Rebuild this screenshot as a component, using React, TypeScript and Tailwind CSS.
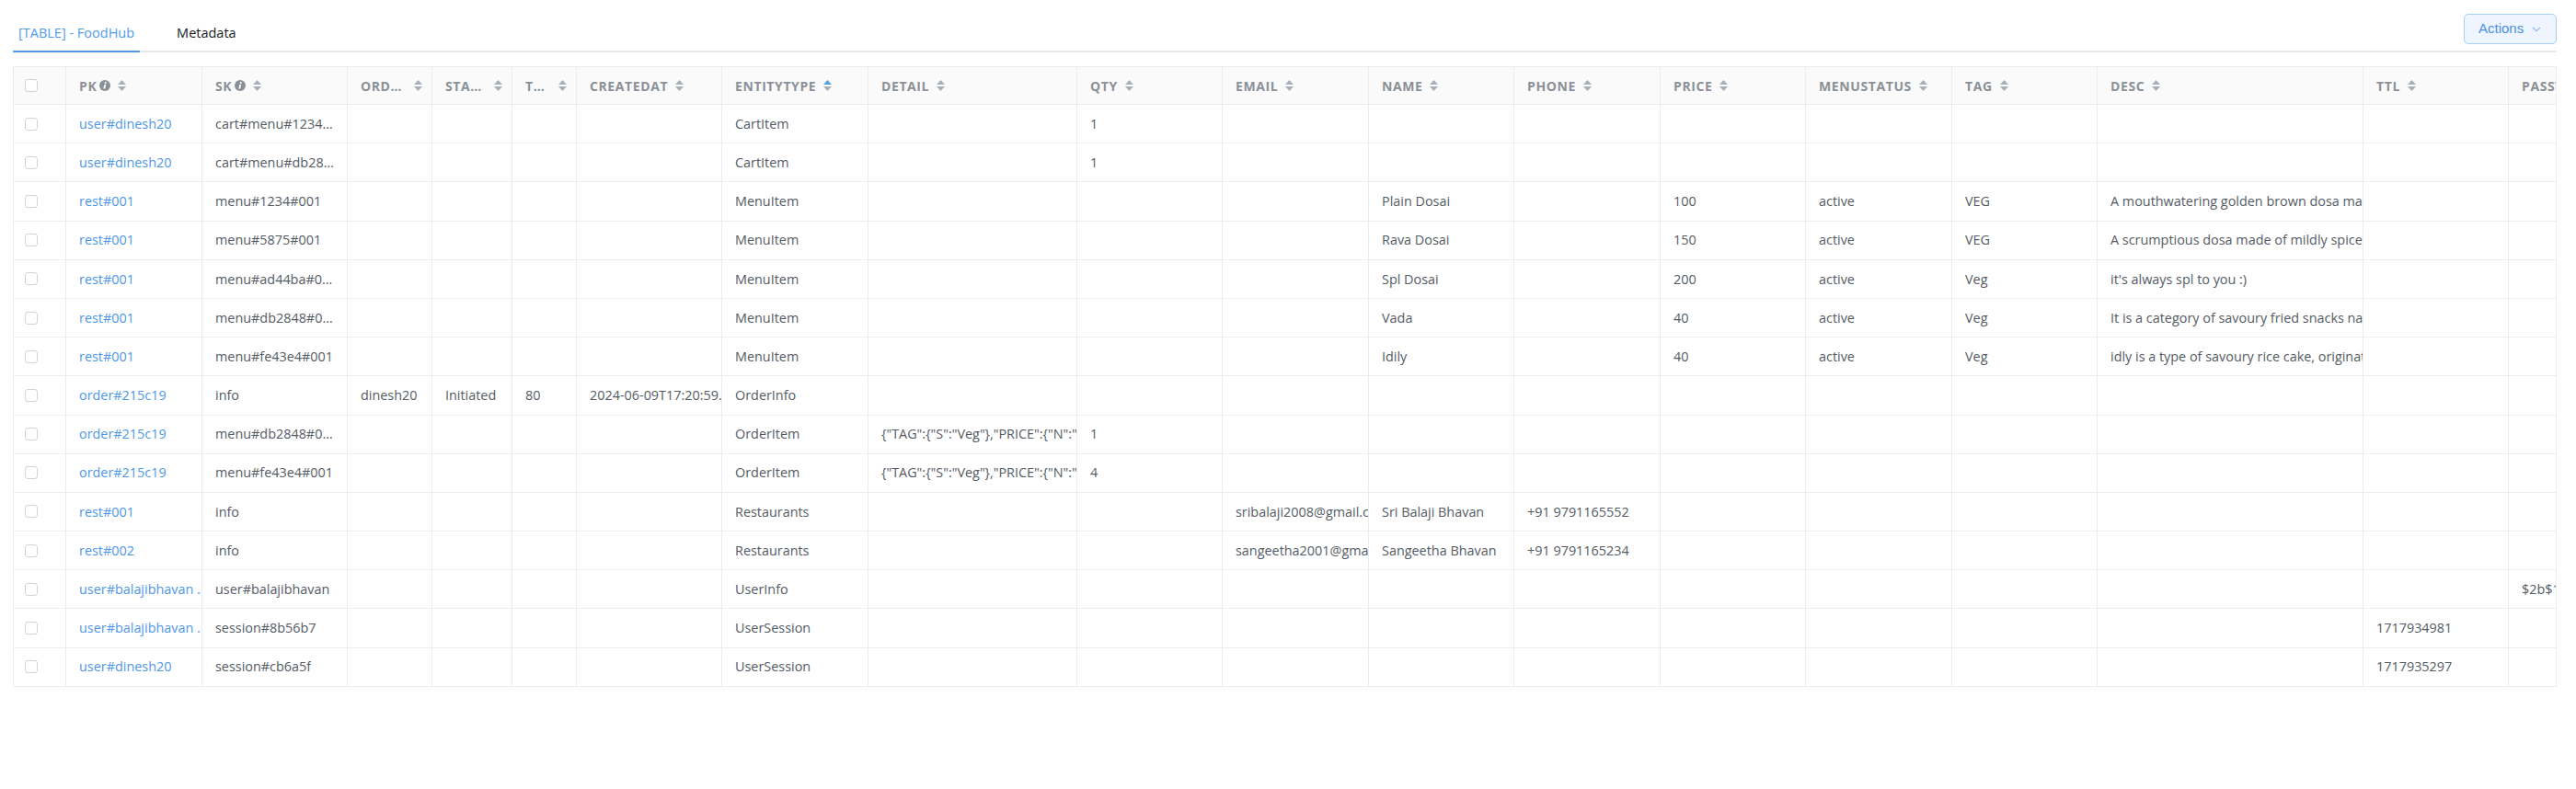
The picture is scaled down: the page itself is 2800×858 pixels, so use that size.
import React from "react";

type Col = {
  key: string;
  label?: string;
  w: string;
  info?: boolean;
  ell?: boolean;
  link?: boolean;
  active?: boolean;
};

const cols: Col[] = [
  { key: "cb", w: "w-[57px]" },
  { key: "PK", label: "PK", w: "w-[148px]", info: true, link: true },
  { key: "SK", label: "SK", w: "w-[158px]", info: true, ell: true },
  { key: "ORDEREDBY", label: "ORDEREDBY", w: "w-[92px]" },
  { key: "STATUS", label: "STATUS", w: "w-[87px]" },
  { key: "TOTAL", label: "TOTAL", w: "w-[70px]" },
  { key: "CREATEDAT", label: "CREATEDAT", w: "w-[158px]" },
  { key: "ENTITYTYPE", label: "ENTITYTYPE", w: "w-[159px]", active: true },
  { key: "DETAIL", label: "DETAIL", w: "w-[227px]" },
  { key: "QTY", label: "QTY", w: "w-[158px]" },
  { key: "EMAIL", label: "EMAIL", w: "w-[159px]" },
  { key: "NAME", label: "NAME", w: "w-[158px]" },
  { key: "PHONE", label: "PHONE", w: "w-[159px]" },
  { key: "PRICE", label: "PRICE", w: "w-[158px]" },
  { key: "MENUSTATUS", label: "MENUSTATUS", w: "w-[159px]" },
  { key: "TAG", label: "TAG", w: "w-[158px]" },
  { key: "DESC", label: "DESC", w: "w-[289px]" },
  { key: "TTL", label: "TTL", w: "w-[158px]" },
  { key: "PASSWORD", label: "PASSWORD", w: "w-[200px]" },
];

type Row = Record<string, string>;

const detail1 = '{"TAG":{"S":"Veg"},"PRICE":{"N":"40"},"NAME":{"S":"Vada"}}';
const detail2 = '{"TAG":{"S":"Veg"},"PRICE":{"N":"40"},"NAME":{"S":"Idily"}}';

const rows: Row[] = [
  { PK: "user#dinesh20", SK: "cart#menu#1234#001", ENTITYTYPE: "CartItem", QTY: "1" },
  { PK: "user#dinesh20", SK: "cart#menu#db2848#001", ENTITYTYPE: "CartItem", QTY: "1" },
  {
    PK: "rest#001",
    SK: "menu#1234#001",
    ENTITYTYPE: "MenuItem",
    NAME: "Plain Dosai",
    PRICE: "100",
    MENUSTATUS: "active",
    TAG: "VEG",
    DESC: "A mouthwatering golden brown dosa made of rice and lentil batter",
  },
  {
    PK: "rest#001",
    SK: "menu#5875#001",
    ENTITYTYPE: "MenuItem",
    NAME: "Rava Dosai",
    PRICE: "150",
    MENUSTATUS: "active",
    TAG: "VEG",
    DESC: "A scrumptious dosa made of mildly spiced semolina batter",
  },
  {
    PK: "rest#001",
    SK: "menu#ad44ba#001",
    ENTITYTYPE: "MenuItem",
    NAME: "Spl Dosai",
    PRICE: "200",
    MENUSTATUS: "active",
    TAG: "Veg",
    DESC: "it's always spl to you :)",
  },
  {
    PK: "rest#001",
    SK: "menu#db2848#001",
    ENTITYTYPE: "MenuItem",
    NAME: "Vada",
    PRICE: "40",
    MENUSTATUS: "active",
    TAG: "Veg",
    DESC: "It is a category of savoury fried snacks native to South India",
  },
  {
    PK: "rest#001",
    SK: "menu#fe43e4#001",
    ENTITYTYPE: "MenuItem",
    NAME: "Idily",
    PRICE: "40",
    MENUSTATUS: "active",
    TAG: "Veg",
    DESC: "idly is a type of savoury rice cake, originating from South India",
  },
  {
    PK: "order#215c19",
    SK: "info",
    ORDEREDBY: "dinesh20",
    STATUS: "Initiated",
    TOTAL: "80",
    CREATEDAT: "2024-06-09T17:20:59.123Z",
    ENTITYTYPE: "OrderInfo",
  },
  { PK: "order#215c19", SK: "menu#db2848#001", ENTITYTYPE: "OrderItem", DETAIL: detail1, QTY: "1" },
  { PK: "order#215c19", SK: "menu#fe43e4#001", ENTITYTYPE: "OrderItem", DETAIL: detail2, QTY: "4" },
  {
    PK: "rest#001",
    SK: "info",
    ENTITYTYPE: "Restaurants",
    EMAIL: "sribalaji2008@gmail.com",
    NAME: "Sri Balaji Bhavan",
    PHONE: "+91 9791165552",
  },
  {
    PK: "rest#002",
    SK: "info",
    ENTITYTYPE: "Restaurants",
    EMAIL: "sangeetha2001@gmail.com",
    NAME: "Sangeetha Bhavan",
    PHONE: "+91 9791165234",
  },
  {
    PK: "user#balajibhavan ...",
    SK: "user#balajibhavan",
    ENTITYTYPE: "UserInfo",
    PASSWORD: "$2b$10$Xk3jd8sLq0",
  },
  {
    PK: "user#balajibhavan ...",
    SK: "session#8b56b7",
    ENTITYTYPE: "UserSession",
    TTL: "1717934981",
  },
  { PK: "user#dinesh20", SK: "session#cb6a5f", ENTITYTYPE: "UserSession", TTL: "1717935297" },
];

function InfoIcon() {
  return (
    <svg width="12" height="12" viewBox="0 0 12 12" className="shrink-0 ml-[3px]">
      <circle cx="6" cy="6" r="6" fill="#8a9097" />
      <circle cx="6.7" cy="3.1" r="1.05" fill="#fff" />
      <path d="M5.3 4.9h1.9L6.2 9.6H4.3z" fill="#fff" />
    </svg>
  );
}

function SortIcon({ active }: { active?: boolean }) {
  return (
    <svg width="9" height="12" viewBox="0 0 9 12" className="shrink-0 ml-[8px]">
      <path d="M4.5 0L9 5H0z" fill={active ? "#539fe5" : "#a9afb6"} />
      <path d="M4.5 12L9 7H0z" fill="#a9afb6" />
    </svg>
  );
}

function Checkbox() {
  return <div className="w-[14px] h-[14px] rounded-[3px] border border-[#cfd4d9] bg-white shrink-0" />;
}

export default function App() {
  return (
    <div className="w-[2800px] min-h-[858px] bg-white pl-[14px] pr-[21px] pt-[15px] font-['Open_Sans',sans-serif]">
      <div className="flex items-end justify-between border-b-2 border-[#e6e8eb]">
        <div className="flex items-end">
          <div className="px-[6px] pb-[9px] -mb-[2px] border-b-2 border-[#539fe5] text-[14.5px] leading-[20px] text-[#4f9be8]">
            [TABLE] - FoodHub
          </div>
          <div className="ml-[34px] px-[6px] pb-[9px] text-[14.5px] leading-[20px] text-[#16191f]">Metadata</div>
        </div>
        <button className="mb-[7px] w-[101px] h-[33px] rounded-[5px] border border-[#a9cdf5] bg-[#eef5fe] flex items-center pl-[15px] font-['Liberation_Sans',Arial,sans-serif] text-[15px] text-[#4a90e2]">
          <span>Actions</span>
          <svg width="10" height="6" viewBox="0 0 10 6" className="ml-[9px]">
            <path d="M1 0.8l4 4 4-4" stroke="#7fb0ea" strokeWidth="1.1" fill="none" />
          </svg>
        </button>
      </div>

      <div className="mt-[15px] border-t border-l border-r border-[#eaeded] overflow-hidden">
        <div className="flex w-max bg-[#fafafa]">
          {cols.map((c) =>
            c.key === "cb" ? (
              <div key={c.key} className={`${c.w} shrink-0 h-[41px] border-r border-b border-[#eaeded] flex items-center pl-[12px]`}>
                <Checkbox />
              </div>
            ) : (
              <div
                key={c.key}
                className={`${c.w} shrink-0 h-[41px] border-r border-b border-[#eaeded] flex items-center pl-[14px] pr-[10px] overflow-hidden`}
              >
                <span className="min-w-0 truncate font-bold text-[14px] tracking-[0.6px] text-[#8a9097]">{c.label}</span>
                {c.info && <InfoIcon />}
                <SortIcon active={c.active} />
              </div>
            )
          )}
        </div>
        {rows.map((r, i) => (
          <div key={i} className="flex w-max bg-white">
            {cols.map((c) => {
              if (c.key === "cb") {
                return (
                  <div key={c.key} className={`${c.w} shrink-0 h-[42.2px] border-r border-b border-[#eaeded] flex items-center pl-[12px]`}>
                    <Checkbox />
                  </div>
                );
              }
              const v = r[c.key] ?? "";
              if (c.ell) {
                return (
                  <div
                    key={c.key}
                    className={`${c.w} shrink-0 h-[42.2px] border-r border-b border-[#eaeded] flex items-center pl-[14px] pr-[12px] overflow-hidden`}
                  >
                    <span className="min-w-0 truncate text-[14.4px] text-[#545b64]">{v}</span>
                  </div>
                );
              }
              return (
                <div
                  key={c.key}
                  className={`${c.w} shrink-0 h-[42.2px] border-r border-b border-[#eaeded] flex items-center pl-[14px] overflow-hidden`}
                >
                  <span className={`whitespace-nowrap text-[14.4px] ${c.link ? "text-[#4f97e7]" : "text-[#545b64]"}`}>{v}</span>
                </div>
              );
            })}
          </div>
        ))}
      </div>
    </div>
  );
}
